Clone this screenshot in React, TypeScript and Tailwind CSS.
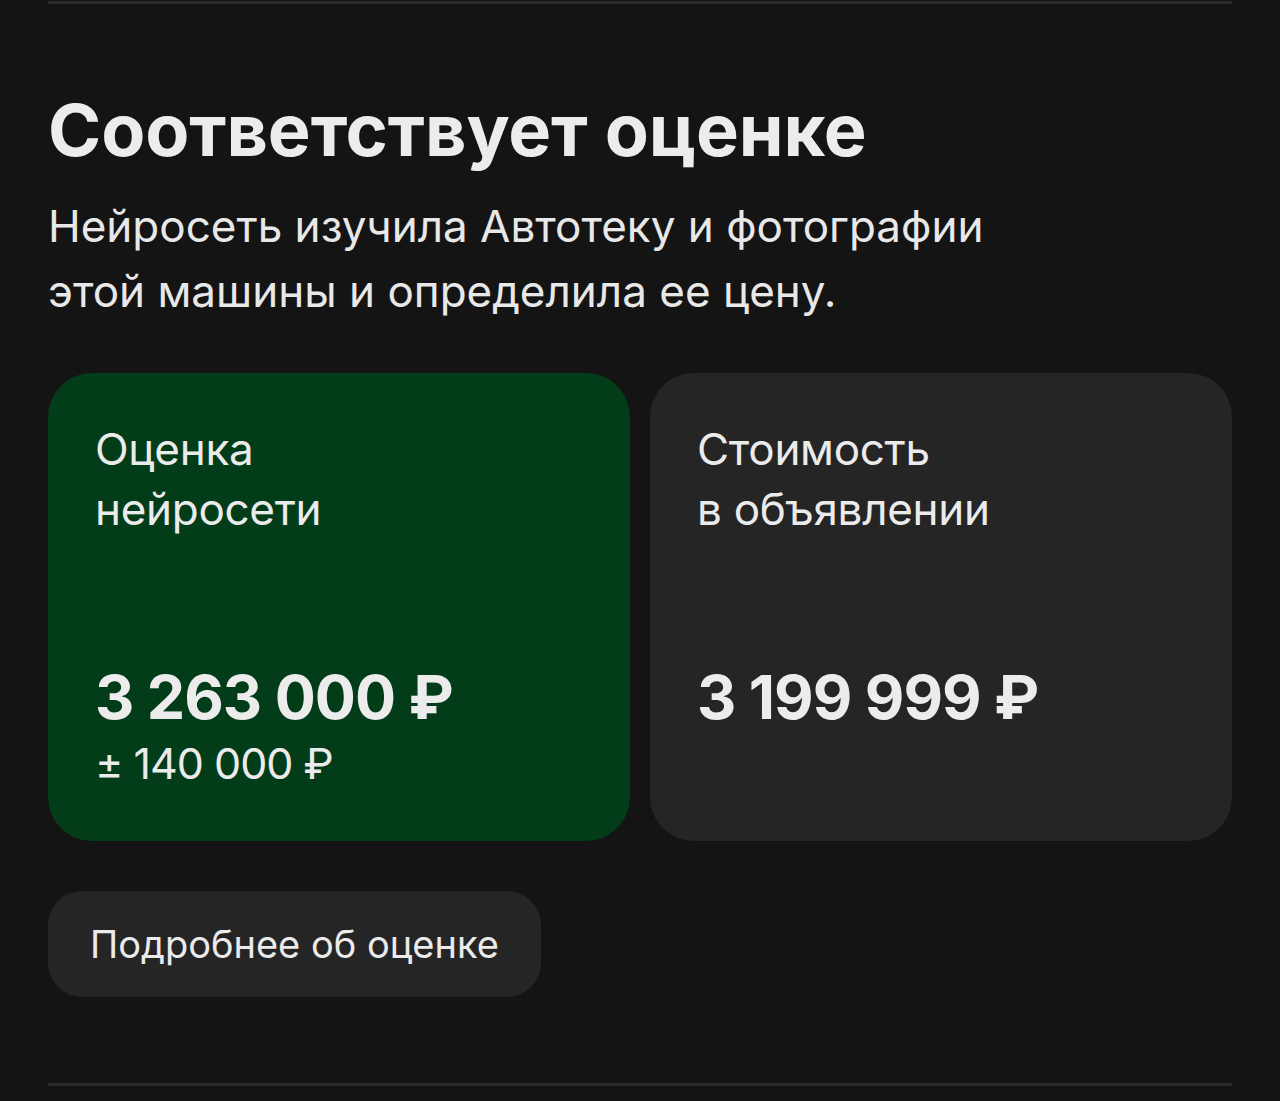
import React from "react";

function PriceCard({
  title,
  price,
  delta,
  className,
}: {
  title: string[];
  price: string;
  delta?: string;
  className: string;
}) {
  return (
    <div className={`flex h-[468px] flex-col rounded-[44px] pl-[47px] pr-8 pt-[46px] ${className}`}>
      <p className="text-[44px] leading-[60px] tracking-[-0.3px] text-[#ebebeb]">
        {title[0]}
        <br />
        {title[1]}
      </p>
      <div className="mt-[126px]">
        <p className="text-[61px] font-bold leading-[64px] tracking-[-1px] text-[#ececec]">{price}</p>
        {delta && <p className="mt-[10px] text-[43px] leading-[48px] tracking-[-1px] text-[#ebebeb]">{delta}</p>}
      </div>
    </div>
  );
}

export default function App() {
  return (
    <div className="min-h-screen bg-[#141414] px-[48px] pt-[1px] font-['Inter','Noto_Sans',sans-serif]">
      <div className="h-[3px] rounded-full bg-[#2c2c2c]" />
      <h1 className="mt-[86px] text-[72px] font-bold leading-[80px] tracking-[-0.1px] text-[#ececec]">
        Соответствует оценке
      </h1>
      <p className="mt-[24px] text-[44px] leading-[65px] tracking-[0px] text-[#e8e8e8]">
        Нейросеть изучила Автотеку и фотографии
        <br />
        этой машины и определила ее цену.
      </p>
      <div className="mt-[49px] grid grid-cols-2 gap-5">
        <PriceCard
          title={["Оценка", "нейросети"]}
          price="3 263 000 ₽"
          delta="± 140 000 ₽"
          className="bg-[#023c18]"
        />
        <PriceCard title={["Стоимость", "в объявлении"]} price="3 199 999 ₽" className="bg-[#252525]" />
      </div>
      <button className="mt-[50px] flex h-[106px] items-center rounded-[34px] bg-[#252525] px-[42px] text-[38px] text-[#ebebeb]">
        Подробнее об оценке
      </button>
      <div className="mt-[86px] h-[3px] rounded-full bg-[#2c2c2c]" />
      <div className="h-[15px]" />
    </div>
  );
}
